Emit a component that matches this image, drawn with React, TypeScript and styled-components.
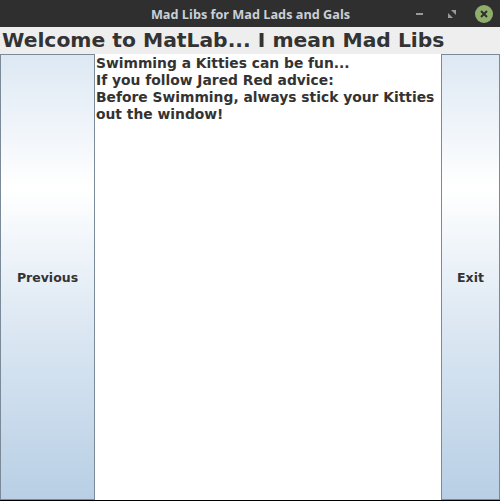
import React from "react";
import styled, { createGlobalStyle } from "styled-components";

const Global = createGlobalStyle`
  html, body { margin: 0; padding: 0; background: #000; }
  #root { width: 500px; height: 501px; }
`;

const Window = styled.div`
  width: 500px;
  height: 501px;
  display: flex;
  flex-direction: column;
  background: #eeeeee;
  border-bottom: 1px solid #000;
  box-sizing: border-box;
`;

const TitleBar = styled.div`
  height: 27px;
  flex: none;
  background: #2f2f2f;
  position: relative;
  display: flex;
  align-items: center;
  justify-content: center;
`;

const Title = styled.div`
  font-family: "Open Sans", "Noto Sans", sans-serif;
  font-weight: 700;
  font-size: 12.7px;
  color: #c9d0d8;
  margin-left: 1px;
`;

const Controls = styled.div`
  position: absolute;
  right: 7px;
  top: 0;
  height: 27px;
  display: flex;
  align-items: center;
  gap: 14px;
`;

const Ctl = styled.div`
  width: 18px;
  height: 18px;
  display: flex;
  align-items: center;
  justify-content: center;
`;

const CloseBtn = styled(Ctl)`
  border-radius: 50%;
  background: #8fae6b;
`;

const Heading = styled.div`
  height: 27px;
  flex: none;
  font-family: "DejaVu Sans", sans-serif;
  font-weight: 700;
  font-size: 20.3px;
  line-height: 27px;
  color: #333333;
  padding-left: 2px;
  white-space: nowrap;
`;

const Body = styled.div`
  flex: 1;
  display: flex;
  min-height: 0;
`;

const Button = styled.button<{ $w: number }>`
  width: ${(p) => p.$w}px;
  flex: none;
  height: 100%;
  margin: 0;
  padding: 0;
  border: 1px solid #7a8a99;
  box-sizing: border-box;
  background: linear-gradient(
    to bottom,
    #dde8f3 0%,
    #ffffff 30%,
    #dde8f3 60%,
    #b8cfe5 100%
  );
  font-family: "DejaVu Sans", sans-serif;
  font-weight: 700;
  font-size: 12.5px;
  color: #333333;
  display: flex;
  align-items: center;
  justify-content: center;
`;

const TextArea = styled.div`
  flex: 1;
  min-width: 0;
  overflow: hidden;
  background: #ffffff;
  font-family: "DejaVu Sans", sans-serif;
  font-weight: 700;
  font-size: 13.85px;
  line-height: 17px;
  color: #333333;
  padding: 1px 0 0 1px;
  white-space: pre;
`;

export default function App() {
  return (
    <>
      <Global />
      <Window>
        <TitleBar>
          <Title>Mad Libs for Mad Lads and Gals</Title>
          <Controls>
            <Ctl>
              <svg width="10" height="4" viewBox="0 0 10 4">
                <rect x="1" y="1" width="7" height="2" fill="#9a9a9a" />
              </svg>
            </Ctl>
            <Ctl>
              <svg width="10" height="10" viewBox="0 0 10 10">
                <polygon points="1,4 1,9 6,9" fill="#9a9a9a" />
                <polygon points="4,1 9,1 9,6" fill="#9a9a9a" />
              </svg>
            </Ctl>
            <CloseBtn>
              <svg width="10" height="10" viewBox="0 0 10 10">
                <path d="M2 2 L8 8 M8 2 L2 8" stroke="#2f2f2f" strokeWidth="2" />
              </svg>
            </CloseBtn>
          </Controls>
        </TitleBar>
        <Heading>Welcome to MatLab... I mean Mad Libs</Heading>
        <Body>
          <Button $w={95}>Previous</Button>
          <TextArea>
            {"Swimming a Kitties can be fun...\nIf you follow Jared Red advice:\nBefore Swimming, always stick your Kitties\nout the window!"}
          </TextArea>
          <Button $w={59}>Exit</Button>
        </Body>
      </Window>
    </>
  );
}
